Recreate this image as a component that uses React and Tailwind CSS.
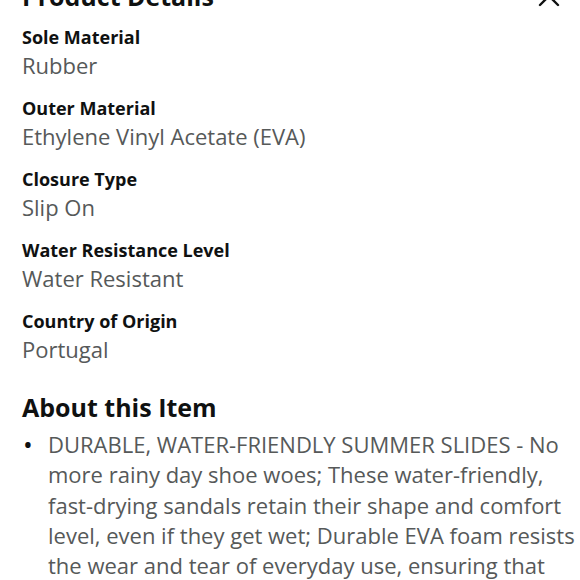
import React from 'react';

const details = [
	['Sole Material', 'Rubber'],
	['Outer Material', 'Ethylene Vinyl Acetate (EVA)'],
	['Closure Type', 'Slip On'],
	['Water Resistance Level', 'Water Resistant'],
	['Country of Origin', 'Portugal'],
];

const App = () => {
	return (
		<div className="w-[580px] h-[580px] overflow-hidden bg-white font-['Open_Sans',sans-serif] text-[#0f1111]">
			<div className="relative mt-[-19px] pl-[22px] pr-[2px]">
				<div className="flex items-center justify-between h-[30px]">
					<h2 className="text-[25px] font-bold leading-[30px]">Product Details</h2>
					<svg width="22" height="22" viewBox="0 0 22 22" className="mr-[18px]">
						<path d="M2 2 L20 20 M20 2 L2 20" stroke="#0f1111" strokeWidth="2.4" strokeLinecap="round" />
					</svg>
				</div>

				<div className="mt-[12px] flex flex-col gap-[14px]">
					{details.map(([label, value]) => (
						<div key={label}>
							<div className="text-[18px] font-bold leading-[28px]">{label}</div>
							<div className="text-[22px] leading-[29px] text-[#565959]">{value}</div>
						</div>
					))}
				</div>

				<h2 className="mt-[28px] text-[25px] font-bold leading-[30px]">About this Item</h2>
				<ul className="mt-[7px]">
					<li className="flex text-[22px] leading-[30.3px] text-[#565959]">
						<span className="w-[26px] shrink-0 pl-[1px] text-[26px] leading-[30.3px] text-[#0f1111]">•</span>
						<span>
							DURABLE, WATER-FRIENDLY SUMMER SLIDES - No more rainy day shoe woes; These water-friendly, fast-drying sandals retain their shape and comfort level, even if they get wet; Durable EVA foam resists the wear and tear of everyday use, ensuring that
						</span>
					</li>
				</ul>
			</div>
		</div>
	);
};

export default App;
